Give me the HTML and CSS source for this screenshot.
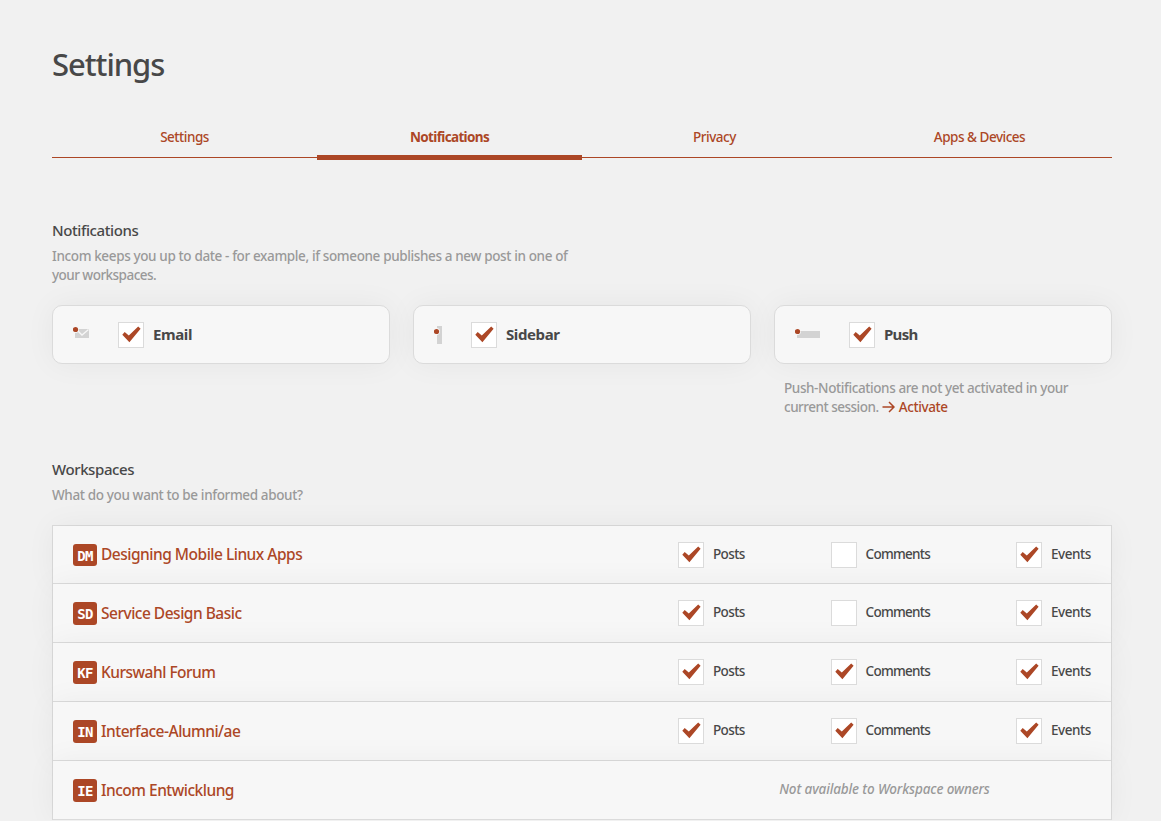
FILE: index.html
```html
<!DOCTYPE html>
<html lang="en">
<head>
    <meta charset="UTF-8">
    <meta name="viewport" content="width=device-width, initial-scale=1.0">
    <title>Settings</title>
    <link rel="stylesheet" href="styles.css">
</head>
<body>
    <svg class="sprite">
        <symbol id="tick" viewBox="0 0 24 24">
            <path d="M3.3 11.8 5.7 9 9.8 12.6 19.2 3.5 21.6 5.8 10.4 19.2Z"/>
        </symbol>
    </svg>

    <div class="container">
        <h1>Settings</h1>

        <nav class="tabs">
            <a class="tab">Settings</a>
            <a class="tab active">Notifications</a>
            <a class="tab">Privacy</a>
            <a class="tab">Apps &amp; Devices</a>
        </nav>

        <section class="channels-section">
            <h2>Notifications</h2>
            <p class="lead">Incom keeps you up to date - for example, if someone publishes a new post in one of <span class="tight">your workspaces.</span></p>
            <div class="channels">
                <div class="channel">
                    <div class="card">
                        <svg width="17" height="20" viewBox="0 0 17 20">
                            <rect x="2" y="4" width="14" height="9" fill="#d3d3d3"/>
                            <path d="M3.5 4.5 9 10 15.5 4.5" fill="none" stroke="#f7f7f7" stroke-width="1.3"/>
                            <circle cx="2.5" cy="4.5" r="3.4" fill="#f7f7f7"/>
                            <circle cx="2.5" cy="4.5" r="2.6" fill="#ac4726"/>
                        </svg>
                        <label class="check"><span class="box"><svg><use href="#tick"/></svg></span>Email</label>
                    </div>
                </div>
                <div class="channel">
                    <div class="card">
                        <svg width="9" height="20" viewBox="0 0 9 20">
                            <rect x="3" y="1" width="5" height="18" fill="#d3d3d3"/>
                            <circle cx="2.5" cy="6.5" r="3.4" fill="#f7f7f7"/>
                            <circle cx="2.5" cy="6.5" r="2.6" fill="#ac4726"/>
                        </svg>
                        <label class="check"><span class="box"><svg><use href="#tick"/></svg></span>Sidebar</label>
                    </div>
                </div>
                <div class="channel">
                    <div class="card">
                        <svg width="26" height="20" viewBox="0 0 26 20">
                            <rect x="2" y="6" width="23" height="7" fill="#d3d3d3"/>
                            <circle cx="2.5" cy="6.5" r="3.4" fill="#f7f7f7"/>
                            <circle cx="2.5" cy="6.5" r="2.6" fill="#ac4726"/>
                        </svg>
                        <label class="check push"><span class="box"><svg><use href="#tick"/></svg></span>Push</label>
                    </div>
                    <p class="hint">Push-Notifications are not yet activated in your <span class="tight">current session.</span> <a><svg class="arrow" viewBox="0 0 13 12"><path d="M0.5 6H12M7 1l5 5-5 5"/></svg>Activate</a></p>
                </div>
            </div>
        </section>

        <section class="workspaces-section">
            <h2>Workspaces</h2>
            <p class="lead">What do you want to be informed about?</p>
            <ul class="workspaces">
                <li>
                    <a class="workspace"><span class="badge">DM</span>Designing Mobile Linux Apps</a>
                    <div class="options">
                        <label class="check"><span class="box"><svg><use href="#tick"/></svg></span>Posts</label>
                        <label class="check comments"><span class="box"></span>Comments</label>
                        <label class="check events"><span class="box"><svg><use href="#tick"/></svg></span>Events</label>
                    </div>
                </li>
                <li>
                    <a class="workspace"><span class="badge">SD</span>Service Design Basic</a>
                    <div class="options">
                        <label class="check"><span class="box"><svg><use href="#tick"/></svg></span>Posts</label>
                        <label class="check comments"><span class="box"></span>Comments</label>
                        <label class="check events"><span class="box"><svg><use href="#tick"/></svg></span>Events</label>
                    </div>
                </li>
                <li>
                    <a class="workspace"><span class="badge">KF</span>Kurswahl Forum</a>
                    <div class="options">
                        <label class="check"><span class="box"><svg><use href="#tick"/></svg></span>Posts</label>
                        <label class="check comments"><span class="box"><svg><use href="#tick"/></svg></span>Comments</label>
                        <label class="check events"><span class="box"><svg><use href="#tick"/></svg></span>Events</label>
                    </div>
                </li>
                <li>
                    <a class="workspace"><span class="badge">IN</span>Interface-Alumni/ae</a>
                    <div class="options">
                        <label class="check"><span class="box"><svg><use href="#tick"/></svg></span>Posts</label>
                        <label class="check comments"><span class="box"><svg><use href="#tick"/></svg></span>Comments</label>
                        <label class="check events"><span class="box"><svg><use href="#tick"/></svg></span>Events</label>
                    </div>
                </li>
                <li>
                    <a class="workspace"><span class="badge">IE</span>Incom Entwicklung</a>
                    <div class="options unavailable"><em>Not available to Workspace owners</em></div>
                </li>
            </ul>
        </section>
    </div>
</body>
</html>
```
FILE: styles.css
```css
:root {
    --accent: #ac4726;
    --text: #484848;
    --muted: #999;
    --line: #dbdbdb;
    --panel: #f7f7f7;
}
* { box-sizing: border-box; }
body {
    margin: 0;
    background: #f1f1f1;
    color: var(--text);
    font: 500 13.5px/19px "Noto Sans", "Open Sans", sans-serif;
    letter-spacing: -0.37px;
}
h1, h2, p, ul { margin: 0; padding: 0; }
a { color: var(--accent); }
.sprite { display: none; }
.container {
    width: 1060px;
    margin-left: 52px;
    padding-top: 44px;
}
h1 {
    font-size: 31px;
    font-weight: 500;
    line-height: 40px;
    letter-spacing: -1.05px;
}
h2 {
    font-size: 15px;
    font-weight: 500;
    line-height: 24px;
    letter-spacing: -0.4px;
}

.tabs {
    display: grid;
    grid-template-columns: repeat(4, 1fr);
    height: 34px;
    margin-top: 40px;
    border-bottom: 1px solid var(--accent);
}
.tab {
    height: 36px;
    line-height: 26px;
    text-align: center;
    letter-spacing: -0.48px;
}
.tab.active {
    border-bottom: 5px solid var(--accent);
    font-weight: 700;
    letter-spacing: -0.65px;
}

.channels-section { margin-top: 60px; }
.lead {
    width: 530px;
    margin-top: 5px;
    color: var(--muted);
}
.tight { letter-spacing: -0.54px; }
.channels {
    display: grid;
    grid-template-columns: repeat(3, 1fr);
    gap: 23px;
    height: 152px;
    margin-top: 20px;
}
.card {
    display: flex;
    align-items: center;
    gap: 28px;
    height: 59px;
    padding-left: 20px;
    background: var(--panel);
    border: 1px solid var(--line);
    border-radius: 10px;
    box-shadow: 0 0 30px rgba(0, 0, 0, 0.05);
}
.check {
    display: flex;
    gap: 9px;
    line-height: 24px;
    letter-spacing: -0.62px;
}
.comments { letter-spacing: -0.74px; }
.events { letter-spacing: -0.42px; }
.card .check {
    font-size: 15px;
    font-weight: 700;
    line-height: 24px;
    letter-spacing: -0.4px;
}
.card .push { letter-spacing: -0.7px; }
.box {
    width: 26px;
    height: 26px;
    background: #fff;
    border: 1px solid var(--line);
}
.box svg {
    display: block;
    width: 24px;
    height: 24px;
    fill: var(--accent);
}
.hint {
    margin: 15px 0 0 10px;
    color: var(--muted);
    letter-spacing: -0.4px;
}
.hint .tight { letter-spacing: -0.5px; }
.arrow {
    width: 13px;
    height: 12px;
    margin-right: 4px;
    vertical-align: -1px;
    fill: none;
    stroke: var(--accent);
    stroke-width: 1.5;
}

.workspaces {
    margin-top: 20px;
    list-style: none;
    border: 1px solid var(--line);
    border-bottom: none;
}
.workspaces li {
    display: flex;
    justify-content: space-between;
    align-items: flex-start;
    height: 59px;
    padding: 16px 20px 0;
    background: var(--panel);
    border-bottom: 1px solid var(--line);
    box-shadow: 0 0 30px rgba(0, 0, 0, 0.05);
}
.workspaces li:first-child { height: 58px; }
.workspace {
    display: flex;
    gap: 4px;
    font-size: 15.5px;
    line-height: 26px;
    letter-spacing: -0.5px;
}
.workspaces li:first-child .workspace { line-height: 24px; }
.badge {
    width: 24px;
    height: 23px;
    margin-top: 2px;
    background: var(--accent);
    border-radius: 3px;
    color: #fff;
    font: 700 14px/24px "DejaVu Sans Mono", monospace;
    letter-spacing: -0.8px;
    text-align: center;
}
.workspaces li:first-child .badge { height: 22px; }
.options {
    display: flex;
    justify-content: space-between;
    width: 413px;
}
.unavailable {
    justify-content: center;
    color: var(--muted);
    line-height: 24px;
    letter-spacing: -0.12px;
}
```
